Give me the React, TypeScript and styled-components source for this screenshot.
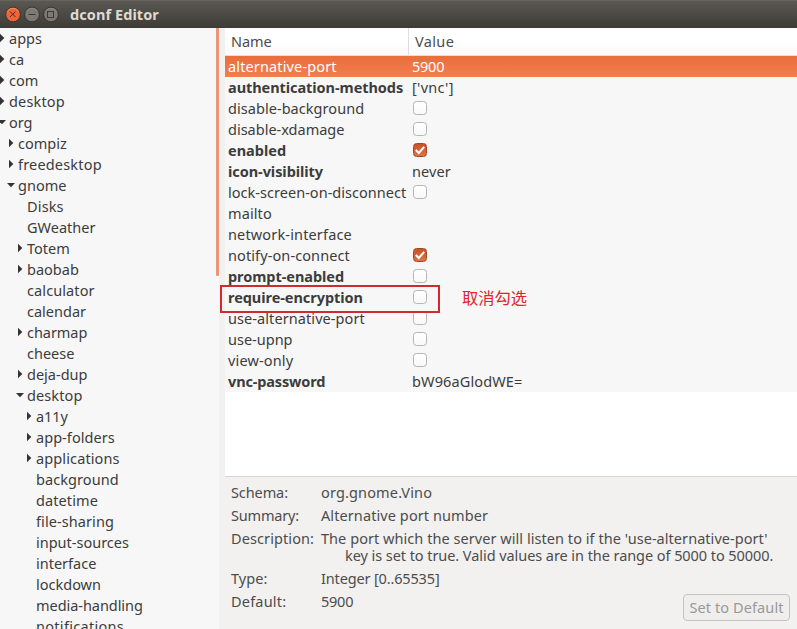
import React from 'react';
import styled, { createGlobalStyle, css } from 'styled-components';

const GlobalStyle = createGlobalStyle`
  * { box-sizing: border-box; }
  body { margin: 0; overflow: hidden; }
`;

const Window = styled.div`
  position: relative;
  width: 797px;
  height: 629px;
  display: flex;
  flex-direction: column;
  overflow: hidden;
  background: #f2f1f0;
  color: #3c3c3c;
  font-family: 'Noto Sans', 'Open Sans', sans-serif;
  font-size: 14.5px;
  white-space: nowrap;
`;

const TitleBar = styled.header`
  flex: 0 0 28px;
  display: flex;
  align-items: flex-start;
  gap: 3px;
  padding: 5px 0 0 5px;
  background: linear-gradient(#595852 0, #504f49 30%, #3d3c37 100%);
  border-top: 1px solid #66645c;
`;

const WindowTitle = styled.h1`
  margin: -2px 0 0 8px;
  color: #dfdbd2;
  font-size: 14.5px;
  line-height: 20px;
  font-weight: 700;
`;

const Body = styled.div`
  flex: 0 0 600px;
  display: flex;
`;

const Tree = styled.nav`
  flex: 0 0 219px;
  display: flex;
  background: #f7f7f7;
  overflow: hidden;
`;

const TreeRows = styled.div`
  flex: 1;
`;

const ScrollThumb = styled.div`
  width: 3px;
  height: 248px;
  background: #e9967a;
  border-radius: 0 0 1px 1px;
`;

const TreeRow = styled.div<{ $depth: number }>`
  display: flex;
  align-items: center;
  height: 21px;
  margin-left: ${(p) => p.$depth * 9 - 3}px;
  line-height: 21px;
`;

const ArrowSlot = styled.span`
  flex: 0 0 12px;
  display: flex;
  svg { display: block; }
`;

const Label = styled.span<{ $spacing?: number; $bold?: boolean }>`
  letter-spacing: ${(p) => p.$spacing ?? 0}px;
  font-weight: ${(p) => (p.$bold ? 700 : 400)};
`;

const Main = styled.main`
  flex: 1;
  margin-left: 6px;
  display: flex;
  flex-direction: column;
`;

const Table = styled.section`
  flex: 0 0 449px;
  background: #fff;
  border-bottom: 1px solid #d8d7d5;
`;

const HeaderRow = styled.div`
  display: flex;
  height: 28px;
  line-height: 26px;
  color: #4c4c4c;
  background: linear-gradient(#fff 50%, #f9f9f9);
  border-bottom: 1px solid #e8dcd6;
`;

const HeaderCell = styled.div<{ $width?: number }>`
  width: ${(p) => (p.$width ? `${p.$width}px` : 'auto')};
  padding-left: 6px;
  & + & { border-left: 1px solid #dedede; }
`;

const Row = styled.div<{ $selected?: boolean }>`
  display: flex;
  height: 21px;
  line-height: 20px;
  background: #f7f7f7;
  ${(p) =>
    p.$selected &&
    css`
      color: #fff;
      background: linear-gradient(#ea6d3c, #f37e4f);
    `}
`;

const NameCell = styled.div`
  width: 185px;
  padding-left: 3px;
`;

const ValueCell = styled.div`
  padding-left: 2px;
`;

const CheckBox = styled.span<{ $checked: boolean }>`
  display: flex;
  width: 14px;
  height: 14px;
  margin: 3px 0 0 1px;
  border: 1px solid ${(p) => (p.$checked ? '#a54523' : '#b6b5b3')};
  border-radius: 3.5px;
  background: ${(p) => (p.$checked ? 'linear-gradient(#c95227, #dc7349)' : 'linear-gradient(#fff, #f8f8f8)')};
`;

const Highlight = styled.div`
  position: absolute;
  left: 220px;
  top: 285px;
  width: 220px;
  height: 28px;
  border: 2px solid #cd2b30;
`;

const Note = styled.div`
  position: absolute;
  left: 462px;
  top: 285px;
  color: #e5212a;
  font: 16.3px/24px 'Noto Sans CJK SC', sans-serif;
`;

const Details = styled.section`
  flex: 1;
  color: #4c4c4c;
`;

const Fields = styled.dl`
  display: grid;
  grid-template-columns: 90px 1fr;
  align-content: start;
  row-gap: 6px;
  margin: 0;
  padding: 7px 0 0 6px;
  line-height: 17px;
`;

const Term = styled.dt``;

const Definition = styled.dd`
  margin: 0;
`;

const Continuation = styled.div`
  padding-left: 24px;
`;

const DefaultButton = styled.button`
  display: block;
  width: 107px;
  height: 27px;
  margin: -16px 7px 0 auto;
  padding: 0;
  border: 1px solid #c4c3c1;
  border-radius: 4px;
  background: #efeeed;
  color: #999896;
  font: inherit;
  line-height: 23px;
`;

const BottomEdge = styled.div`
  flex: 0 0 1px;
  background: linear-gradient(90deg, #777 0 345px, #211019 345px);
`;

type ControlKind = 'close' | 'minimize' | 'maximize';

const WindowControl = ({ kind }: { kind: ControlKind }) => {
  const close = kind === 'close';
  return (
    <svg width="16" height="16" viewBox="0 0 16 16" fill="none">
      <circle cx="8" cy="8.5" r="7.4" fill={close ? '#ed6537' : '#7b7972'} stroke="#33322e" strokeWidth="1" />
      <path d="M2.4 5.5A6.4 6.4 0 0 1 13.6 5.5" stroke={close ? '#f69472' : '#918f87'} strokeWidth="0.8" />
      <g stroke={close ? '#5d281c' : '#3c3b36'} strokeWidth="1">
        {close && <path d="M5 5.5l5.5 5.5M10.5 5.5l-5.5 5.5" />}
        {kind === 'minimize' && <path d="M4.5 8.5h7" />}
        {kind === 'maximize' && <rect x="4.5" y="5.5" width="6" height="6" />}
      </g>
    </svg>
  );
};

type ArrowState = 'open' | 'closed' | 'none';

const Arrow = ({ state }: { state: ArrowState }) => (
  <ArrowSlot>
    {state !== 'none' && (
      <svg width="12" height="11" viewBox="0 0 12 11" fill="#333">
        <path d={state === 'open' ? 'M1 3h8L5 7.3z' : 'M3 .8l4.3 4.2L3 9.2z'} />
      </svg>
    )}
  </ArrowSlot>
);

const tree: [string, number, ArrowState, number?][] = [
  ['apps', 0, 'closed'],
  ['ca', 0, 'closed'],
  ['com', 0, 'closed'],
  ['desktop', 0, 'closed', 0.15],
  ['org', 0, 'open'],
  ['compiz', 1, 'closed'],
  ['freedesktop', 1, 'closed', 0.18],
  ['gnome', 1, 'open'],
  ['Disks', 2, 'none', 0.15],
  ['GWeather', 2, 'none'],
  ['Totem', 2, 'closed'],
  ['baobab', 2, 'closed'],
  ['calculator', 2, 'none', 0.1],
  ['calendar', 2, 'none'],
  ['charmap', 2, 'closed', -0.05],
  ['cheese', 2, 'none'],
  ['deja-dup', 2, 'closed'],
  ['desktop', 2, 'open', 0.1],
  ['a11y', 3, 'closed', -0.1],
  ['app-folders', 3, 'closed', 0.05],
  ['applications', 3, 'closed', 0.12],
  ['background', 3, 'none', 0.08],
  ['datetime', 3, 'none', 0.1],
  ['file-sharing', 3, 'none', 0.08],
  ['input-sources', 3, 'none'],
  ['interface', 3, 'none'],
  ['lockdown', 3, 'none'],
  ['media-handling', 3, 'none', -0.05],
  ['notifications', 3, 'none', 0.3],
];

interface Setting {
  name: string;
  value: string | boolean;
  bold?: boolean;
  spacing?: number;
  valueSpacing?: number;
}

const settings: Setting[] = [
  { name: 'alternative-port', value: '5900', spacing: 0.14, valueSpacing: -0.25 },
  { name: 'authentication-methods', value: "['vnc']", bold: true, spacing: -0.06, valueSpacing: 0.3 },
  { name: 'disable-background', value: false, spacing: 0.05 },
  { name: 'disable-xdamage', value: false },
  { name: 'enabled', value: true, bold: true },
  { name: 'icon-visibility', value: 'never', bold: true, spacing: -0.06, valueSpacing: 0.1 },
  { name: 'lock-screen-on-disconnect', value: false, spacing: 0.03 },
  { name: 'mailto', value: '', spacing: 0.1 },
  { name: 'network-interface', value: '', spacing: 0.15 },
  { name: 'notify-on-connect', value: true, spacing: 0.1 },
  { name: 'prompt-enabled', value: false, bold: true, spacing: -0.05 },
  { name: 'require-encryption', value: false, bold: true, spacing: -0.05 },
  { name: 'use-alternative-port', value: false, spacing: 0.08 },
  { name: 'use-upnp', value: false },
  { name: 'view-only', value: false, spacing: 0.15 },
  { name: 'vnc-password', value: 'bW96aGlodWE=', bold: true, spacing: -0.15, valueSpacing: 0.12 },
];

export default function App() {
  return (
    <Window>
      <GlobalStyle />
      <TitleBar>
        <WindowControl kind="close" />
        <WindowControl kind="minimize" />
        <WindowControl kind="maximize" />
        <WindowTitle><Label $bold $spacing={0.08}>dconf Editor</Label></WindowTitle>
      </TitleBar>
      <Body>
        <Tree>
          <TreeRows>
            {tree.map(([name, depth, state, spacing], i) => (
              <TreeRow key={i} $depth={depth}>
                <Arrow state={state} />
                <Label $spacing={spacing}>{name}</Label>
              </TreeRow>
            ))}
          </TreeRows>
          <ScrollThumb />
        </Tree>
        <Main>
          <Table>
            <HeaderRow>
              <HeaderCell $width={183}><Label $spacing={-0.1}>Name</Label></HeaderCell>
              <HeaderCell><Label $spacing={0.35}>Value</Label></HeaderCell>
            </HeaderRow>
            {settings.map((s, i) => (
              <Row key={s.name} $selected={i === 0}>
                <NameCell><Label $bold={s.bold} $spacing={s.spacing}>{s.name}</Label></NameCell>
                <ValueCell>
                  {typeof s.value === 'boolean' ? (
                    <CheckBox $checked={s.value}>
                      {s.value && (
                        <svg width="12" height="12" viewBox="0 0 12 12" fill="none" stroke="#fff" strokeWidth="2">
                          <path d="M1.8 6l3 3 5.4-6.2" />
                        </svg>
                      )}
                    </CheckBox>
                  ) : (
                    <Label $spacing={s.valueSpacing}>{s.value}</Label>
                  )}
                </ValueCell>
              </Row>
            ))}
          </Table>
          <Details>
            <Fields>
              <Term><Label $spacing={-0.1}>Schema:</Label></Term>
              <Definition><Label $spacing={0.15}>org.gnome.Vino</Label></Definition>
              <Term><Label $spacing={-0.2}>Summary:</Label></Term>
              <Definition><Label $spacing={0.09}>Alternative port number</Label></Definition>
              <Term><Label $spacing={0.1}>Description:</Label></Term>
              <Definition>
                <Label $spacing={0.05}>The port which the server will listen to if the 'use-alternative-port'</Label>
                <Continuation>
                  <Label $spacing={-0.065}>key is set to true. Valid values are in the range of 5000 to 50000.</Label>
                </Continuation>
              </Definition>
              <Term><Label $spacing={0.05}>Type:</Label></Term>
              <Definition><Label $spacing={-0.15}>Integer [0..65535]</Label></Definition>
              <Term><Label $spacing={0.2}>Default:</Label></Term>
              <Definition><Label $spacing={-0.25}>5900</Label></Definition>
            </Fields>
            <DefaultButton><Label $spacing={0.1}>Set to Default</Label></DefaultButton>
          </Details>
        </Main>
      </Body>
      <BottomEdge />
      <Highlight />
      <Note>取消勾选</Note>
    </Window>
  );
}
